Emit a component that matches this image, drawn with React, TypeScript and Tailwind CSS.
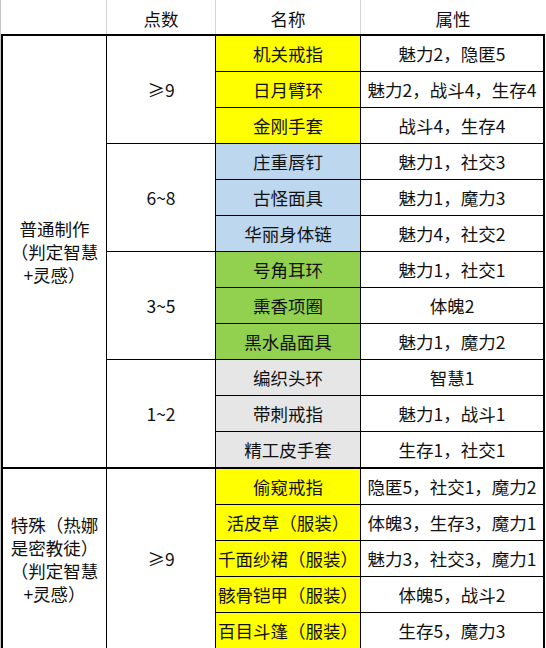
const YELLOW = "bg-[#ffff00]"

type Sub = { pts: string; color: string; items: [string, string][] }
type Group = { label: string[]; subs: Sub[] }

const groups: Group[] = [
  {
    label: ["普通制作", "（判定智慧", "+灵感）"],
    subs: [
      {
        pts: "≥9",
        color: YELLOW,
        items: [
          ["机关戒指", "魅力2，隐匿5"],
          ["日月臂环", "魅力2，战斗4，生存4"],
          ["金刚手套", "战斗4，生存4"],
        ],
      },
      {
        pts: "6~8",
        color: "bg-[#bdd7ee]",
        items: [
          ["庄重唇钉", "魅力1，社交3"],
          ["古怪面具", "魅力1，魔力3"],
          ["华丽身体链", "魅力4，社交2"],
        ],
      },
      {
        pts: "3~5",
        color: "bg-[#92d050]",
        items: [
          ["号角耳环", "魅力1，社交1"],
          ["熏香项圈", "体魄2"],
          ["黑水晶面具", "魅力1，魔力2"],
        ],
      },
      {
        pts: "1~2",
        color: "bg-[#e7e6e6]",
        items: [
          ["编织头环", "智慧1"],
          ["带刺戒指", "魅力1，战斗1"],
          ["精工皮手套", "生存1，社交1"],
        ],
      },
    ],
  },
  {
    label: ["特殊（热娜", "是密教徒）", "（判定智慧", "+灵感）"],
    subs: [
      {
        pts: "≥9",
        color: YELLOW,
        items: [
          ["偷窥戒指", "隐匿5，社交1，魔力2"],
          ["活皮草（服装）", "体魄3，生存3，魔力1"],
          ["千面纱裙（服装）", "魅力3，社交3，魔力1"],
          ["骸骨铠甲（服装）", "体魄5，战斗2"],
          ["百目斗篷（服装）", "生存5，魔力3"],
        ],
      },
    ],
  },
]

export default function App() {
  return (
    <div className="min-h-screen bg-white">
      <div
        className="w-[545px] border-l border-[#c6c6c6] text-[17.5px] text-[#111] leading-[22px]"
        style={{ fontFamily: '"Noto Sans CJK SC", "Noto Sans", sans-serif' }}
      >
        {/* header */}
        <div className="flex h-[36px] border-b-2 border-black">
          <div className="w-[106px] border-r border-[#d4d4d4]" />
          <div className="w-[109px] border-r border-[#d4d4d4] flex items-center justify-center pt-1">点数</div>
          <div className="w-[145px] border-r border-[#d4d4d4] flex items-center justify-center pt-1">名称</div>
          <div className="flex-1 flex items-center justify-center pt-1">属性</div>
        </div>

        {groups.map((g, gi) => (
          <div key={gi} className="flex border-l-2 border-r-2 border-b-2 border-black">
            <div className="w-[104px] border-r border-black flex flex-col items-center justify-center gap-[2px]">
              {g.label.map((l) => (
                <div key={l} className="whitespace-nowrap leading-[21px]">{l}</div>
              ))}
            </div>
            <div className="flex-1 flex flex-col">
              {g.subs.map((s, si) => (
                <div key={si} className={`flex ${si < g.subs.length - 1 ? "border-b border-black" : ""}`}>
                  <div className="w-[109px] border-r border-black flex items-center justify-center">{s.pts}</div>
                  <div className="flex-1 flex flex-col">
                    {s.items.map(([name, attr], ii) => (
                      <div
                        key={name}
                        className={`flex ${ii < s.items.length - 1 ? "h-[36px] border-b border-black" : "h-[35px]"}`}
                      >
                        <div className={`w-[145px] border-r border-black flex items-center justify-center whitespace-nowrap ${s.color}`}>
                          {name}
                        </div>
                        <div className="flex-1 flex items-center justify-center whitespace-nowrap">{attr}</div>
                      </div>
                    ))}
                  </div>
                </div>
              ))}
            </div>
          </div>
        ))}
      </div>
    </div>
  )
}
